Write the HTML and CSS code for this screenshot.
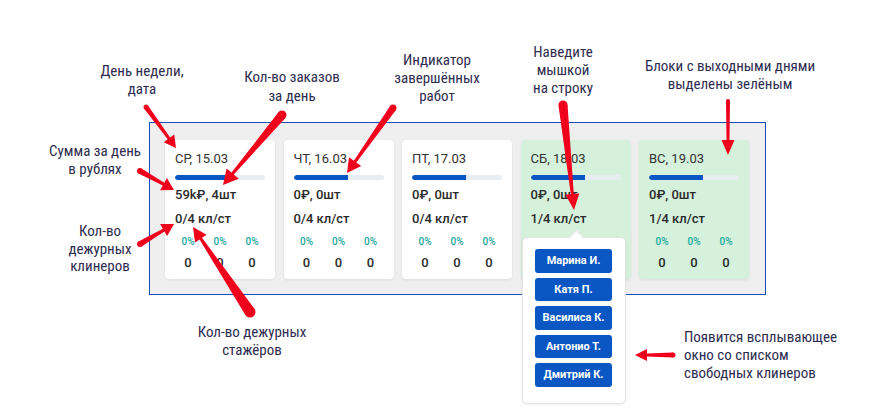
FILE: index.html
```html
<!DOCTYPE html>
<html lang="ru">
<head>
    <meta charset="UTF-8">
    <meta name="viewport" content="width=device-width, initial-scale=1.0">
    <title>Календарь клинеров</title>
    <link rel="stylesheet" href="styles.css">
</head>
<body>
    <div class="stage">
        <div class="week">
            <div class="day">
                <div class="date">СР, 15.03</div>
                <div class="bar"><div class="fill" style="width: 56%"></div></div>
                <div class="line">59k₽, 4шт</div>
                <div class="line">0/4 кл/ст</div>
                <div class="stats">
                    <span class="pct">0%</span><span class="pct">0%</span><span class="pct">0%</span>
                    <span class="num">0</span><span class="num">0</span><span class="num">0</span>
                </div>
            </div>
            <div class="day">
                <div class="date">ЧТ, 16.03</div>
                <div class="bar"><div class="fill" style="width: 60%"></div></div>
                <div class="line">0₽, 0шт</div>
                <div class="line">0/4 кл/ст</div>
                <div class="stats">
                    <span class="pct">0%</span><span class="pct">0%</span><span class="pct">0%</span>
                    <span class="num">0</span><span class="num">0</span><span class="num">0</span>
                </div>
            </div>
            <div class="day">
                <div class="date">ПТ, 17.03</div>
                <div class="bar"><div class="fill" style="width: 60%"></div></div>
                <div class="line">0₽, 0шт</div>
                <div class="line">0/4 кл/ст</div>
                <div class="stats">
                    <span class="pct">0%</span><span class="pct">0%</span><span class="pct">0%</span>
                    <span class="num">0</span><span class="num">0</span><span class="num">0</span>
                </div>
            </div>
            <div class="day weekend">
                <div class="date">СБ, 18.03</div>
                <div class="bar"><div class="fill" style="width: 60%"></div></div>
                <div class="line">0₽, 0шт</div>
                <div class="line">1/4 кл/ст</div>
                <div class="stats">
                    <span class="pct">0%</span><span class="pct">0%</span><span class="pct">0%</span>
                    <span class="num">0</span><span class="num">0</span><span class="num">0</span>
                </div>
                <div class="popup">
                    <button>Марина И.</button>
                    <button>Катя П.</button>
                    <button>Василиса К.</button>
                    <button>Антонио Т.</button>
                    <button>Дмитрий К.</button>
                </div>
            </div>
            <div class="day weekend">
                <div class="date">ВС, 19.03</div>
                <div class="bar"><div class="fill" style="width: 60%"></div></div>
                <div class="line">0₽, 0шт</div>
                <div class="line">1/4 кл/ст</div>
                <div class="stats">
                    <span class="pct">0%</span><span class="pct">0%</span><span class="pct">0%</span>
                    <span class="num">0</span><span class="num">0</span><span class="num">0</span>
                </div>
            </div>
        </div>

        <div class="note n-date">День недели,<br>дата</div>
        <div class="note n-orders">Кол-во заказов<br>за день</div>
        <div class="note n-progress">Индикатор<br>завершённых<br>работ</div>
        <div class="note n-hover">Наведите<br>мышкой<br>на строку</div>
        <div class="note n-weekend">Блоки с выходными днями<br>выделены зелёным</div>
        <div class="note n-sum">Сумма за день<br>в рублях</div>
        <div class="note n-cleaners">Кол-во<br>дежурных<br>клинеров</div>
        <div class="note n-trainees">Кол-во дежурных<br>стажёров</div>
        <div class="note n-popup">Появится всплывающее<br>окно со списком<br>свободных клинеров</div>

        <svg class="arrows" id="arrows" width="870" height="410" viewBox="0 0 870 410"></svg>
    </div>

    <script>
        // tail x, tail y, tip x, tip y, tail width, head length, head width
        const arrows = [
            [146, 107, 176, 148, 5, 12, 13],
            [282, 115, 223, 185, 9, 15, 16],
            [393, 108, 347, 173, 7, 14, 15],
            [563, 105, 574, 210, 9, 16, 14],
            [728, 101, 728, 155, 4, 15, 13],
            [140, 171, 174, 190, 6, 12, 14],
            [140, 244, 174, 224, 6, 12, 14],
            [250, 312, 193, 227, 11, 14, 14],
            [673, 355, 635, 355, 5, 12, 12]
        ];
        const svg = document.getElementById('arrows');
        let out = '';
        arrows.forEach(a => {
            const [x1, y1, x2, y2, w, h, hw] = a;
            const len = Math.hypot(x2 - x1, y2 - y1);
            const ux = (x2 - x1) / len, uy = (y2 - y1) / len;
            const px = -uy, py = ux;
            const bx = x2 - ux * h, by = y2 - uy * h;
            const p = (x, y) => x.toFixed(1) + ',' + y.toFixed(1);
            const pts = [
                p(x1 + px * w / 2, y1 + py * w / 2),
                p(bx + px * 1.5, by + py * 1.5),
                p(bx + px * hw / 2, by + py * hw / 2),
                p(x2, y2),
                p(bx - px * hw / 2, by - py * hw / 2),
                p(bx - px * 1.5, by - py * 1.5),
                p(x1 - px * w / 2, y1 - py * w / 2)
            ];
            out += `<polygon points="${pts.join(' ')}"/>`;
            out += `<circle cx="${x1}" cy="${y1}" r="${w / 2}"/>`;
        });
        svg.innerHTML = out;
    </script>
</body>
</html>
```

FILE: styles.css
```css
body {
    margin: 0;
    background: #fff;
    font-family: Roboto, "Noto Sans", Arial, sans-serif;
}
.stage {
    position: relative;
    width: 870px;
    height: 410px;
    overflow: hidden;
}
.week {
    display: flex;
    gap: 8.5px;
    width: 584px;
    margin: 122px 0 0 149px;
    padding: 17px 16px 15px 15px;
    background: #efefef;
    border: 1px solid #1c4fb6;
}
.day {
    position: relative;
    width: 110px;
    box-sizing: border-box;
    padding: 11px 10px 8px;
    background: #fff;
    border-radius: 4px;
    box-shadow: 0 1px 3px rgba(0,0,0,0.08);
    color: #2b2b2b;
}
.weekend {
    background: #d5f0db;
}
.date {
    font-size: 13px;
    line-height: 16px;
    color: #333;
}
.bar {
    height: 5px;
    margin-top: 8px;
    background: #e8edf1;
    border-radius: 3px;
    overflow: hidden;
}
.fill {
    height: 100%;
    background: #0a56c2;
    border-radius: 3px 0 0 3px;
}
.line {
    font-size: 13px;
    line-height: 16px;
    font-weight: 500;
    margin-top: 7px;
}
.line + .line {
    margin-top: 8px;
}
.stats {
    display: grid;
    grid-template-columns: repeat(3, 32px);
    justify-content: center;
    row-gap: 7px;
    margin-top: 9px;
    text-align: center;
}
.pct {
    font-size: 10px;
    line-height: 12px;
    font-weight: 500;
    color: #1ba89b;
}
.num {
    font-size: 13px;
    line-height: 16px;
    font-weight: 500;
}
.popup {
    position: absolute;
    top: 97px;
    left: 1px;
    width: 104px;
    box-sizing: border-box;
    padding: 11px 0 16px;
    display: flex;
    flex-direction: column;
    align-items: center;
    gap: 5px;
    background: #fff;
    border: 1px solid #e2e4e6;
    border-radius: 5px;
    box-shadow: 0 1px 3px rgba(0,0,0,0.06);
    z-index: 2;
}
.popup::before {
    content: "";
    position: absolute;
    top: -6px;
    left: 48px;
    width: 10px;
    height: 10px;
    background: #fff;
    border-left: 1px solid #e2e4e6;
    border-top: 1px solid #e2e4e6;
    transform: rotate(45deg);
}
.popup button {
    width: 77px;
    height: 23.5px;
    padding: 0;
    border: none;
    border-radius: 3px;
    background: #0a56c2;
    color: #fff;
    font-family: Roboto, Arial, sans-serif;
    font-size: 11px;
    font-weight: 700;
}
.note {
    position: absolute;
    transform: translateX(-50%);
    font-family: "Roboto Condensed", "Liberation Sans Narrow", Roboto, sans-serif;
    font-size: 15px;
    line-height: 18px;
    color: #2e2c50;
    text-align: center;
    white-space: nowrap;
}
.n-date { left: 142px; top: 62px; }
.n-orders { left: 292px; top: 68px; line-height: 19px; }
.n-progress { left: 437px; top: 51px; }
.n-hover { left: 563px; top: 43px; }
.n-weekend { left: 730px; top: 57px; }
.n-sum { left: 95px; top: 143px; line-height: 17.5px; }
.n-cleaners { left: 100px; top: 223px; line-height: 17.5px; }
.n-trainees { left: 252px; top: 323px; }
.n-popup { left: 684px; top: 328px; transform: none; text-align: left; }
.arrows {
    position: absolute;
    top: 0;
    left: 0;
    fill: #f0001c;
    pointer-events: none;
    z-index: 5;
}
```
